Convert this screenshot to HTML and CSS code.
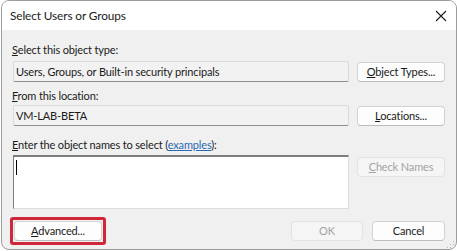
FILE: index.html
```html
<!DOCTYPE html>
<html>
<head>
<meta charset="utf-8">
<link rel="stylesheet" href="styles.css">
</head>
<body>
<div class="window">
  <div class="titlebar">
    <span class="title">Select Users or Groups</span>
    <svg class="close" width="12" height="12" viewBox="0 0 12 12"><path d="M1 1 L11 11 M11 1 L1 11" stroke="#1c1c1c" stroke-width="1.1" fill="none"/></svg>
  </div>
  <div class="content">
    <div class="label label-first"><u>S</u>elect this object type:</div>
    <div class="row">
      <div class="field">Users, Groups, or Built-in security principals</div>
      <div class="btn"><u>O</u>bject Types...</div>
    </div>
    <div class="label label-second"><u>F</u>rom this location:</div>
    <div class="row">
      <div class="field">VM-LAB-BETA</div>
      <div class="btn"><u>L</u>ocations...</div>
    </div>
    <div class="label label-third"><u>E</u>nter the object names to select (<span class="link">examples</span>):</div>
    <div class="row row-top">
      <div class="textarea"><span class="caret"></span></div>
      <div class="btn btn-disabled btn-check"><u>C</u>heck Names</div>
    </div>
    <div class="bottom">
      <div class="highlight">
        <div class="btn btn-adv"><u>A</u>dvanced...</div>
      </div>
      <div class="actions">
        <div class="btn btn-disabled btn-ok">OK</div>
        <div class="btn btn-cancel">Cancel</div>
      </div>
    </div>
  </div>
  <svg class="grip" width="9" height="9" viewBox="0 0 9 9">
    <rect x="7" y="1" width="1" height="1" fill="#b8b8b8"/>
    <rect x="4" y="4" width="1" height="1" fill="#b8b8b8"/>
    <rect x="7" y="4" width="1" height="1" fill="#b8b8b8"/>
    <rect x="1" y="7" width="1" height="1" fill="#b8b8b8"/>
    <rect x="4" y="7" width="1" height="1" fill="#b8b8b8"/>
    <rect x="7" y="7" width="1" height="1" fill="#b8b8b8"/>
  </svg>
</div>
</body>
</html>
```

FILE: styles.css
```css
html, body {
  margin: 0;
  padding: 0;
  background: #ffffff;
}
body {
  font-family: "Lato", "Liberation Sans", sans-serif;
  font-size: 11px;
  letter-spacing: -0.15px;
  color: #1a1a1a;
}
.window {
  position: relative;
  margin-left: 1px;
  width: 454px;
  height: 248px;
  border: 1px solid #9c9c9c;
  border-radius: 8px;
  overflow: hidden;
  background: #f0f0f0;
  display: flex;
  flex-direction: column;
}
.titlebar {
  height: 29px;
  background: #ffffff;
  display: flex;
  align-items: center;
  justify-content: space-between;
  padding: 0 9px 0 8px;
}
.title {
  font-size: 11.8px;
  letter-spacing: -0.1px;
  color: #1a1a1a;
}
.close {
  display: block;
}
.content {
  flex: 1;
  padding: 12px 11px 0 11px;
  display: flex;
  flex-direction: column;
}
.label {
  height: 16px;
  line-height: 16px;
  margin-left: -1px;
  white-space: nowrap;
}
.label-first { margin-bottom: 3px; }
.label-second { margin-top: 6px; margin-bottom: 1px; }
.label-third { margin-top: 11px; margin-bottom: 2px; }
.link {
  color: #2a69b4;
  text-decoration: underline;
}
.row {
  display: flex;
  gap: 8px;
  align-items: center;
}
.row-top {
  align-items: flex-start;
}
.field {
  flex: 1;
  height: 21px;
  box-sizing: border-box;
  background: #f2f2f2;
  border: 1px solid #dadada;
  border-bottom: 1px solid #8e8e8e;
  border-radius: 2px;
  padding-left: 2px;
  line-height: 19px;
  white-space: nowrap;
}
.btn {
  width: 88px;
  height: 20px;
  box-sizing: border-box;
  background: #fdfdfd;
  border: 1px solid #d2d2d2;
  border-bottom-color: #bdbdbd;
  border-radius: 4px;
  text-align: center;
  line-height: 18px;
  white-space: nowrap;
  color: #1a1a1a;
}
.btn-disabled {
  background: #f5f5f5;
  border-color: #e2e2e2;
  color: #a3a3a3;
}
.btn-check {
  margin-top: 2px;
}
.textarea {
  flex: 1;
  height: 54px;
  box-sizing: border-box;
  background: #ffffff;
  border: 1px solid #dcdcdc;
  border-top: 2px solid #7d7d7d;
  border-left: 1px solid #7d7d7d;
  padding: 3px 0 0 2px;
}
.caret {
  display: block;
  width: 1px;
  height: 15px;
  background: #000000;
}
.bottom {
  margin-top: 8px;
  display: flex;
  align-items: center;
  justify-content: space-between;
}
.highlight {
  margin-left: -3px;
  border: 3px solid #d0263a;
  border-radius: 3px;
  padding: 1px;
}
.btn-adv {
  width: 88px;
}
.actions {
  display: flex;
  gap: 9px;
}
.btn-ok {
  width: 72px;
}
.btn-cancel {
  width: 73px;
}
.grip {
  position: absolute;
  right: 1px;
  bottom: 0px;
}
```
